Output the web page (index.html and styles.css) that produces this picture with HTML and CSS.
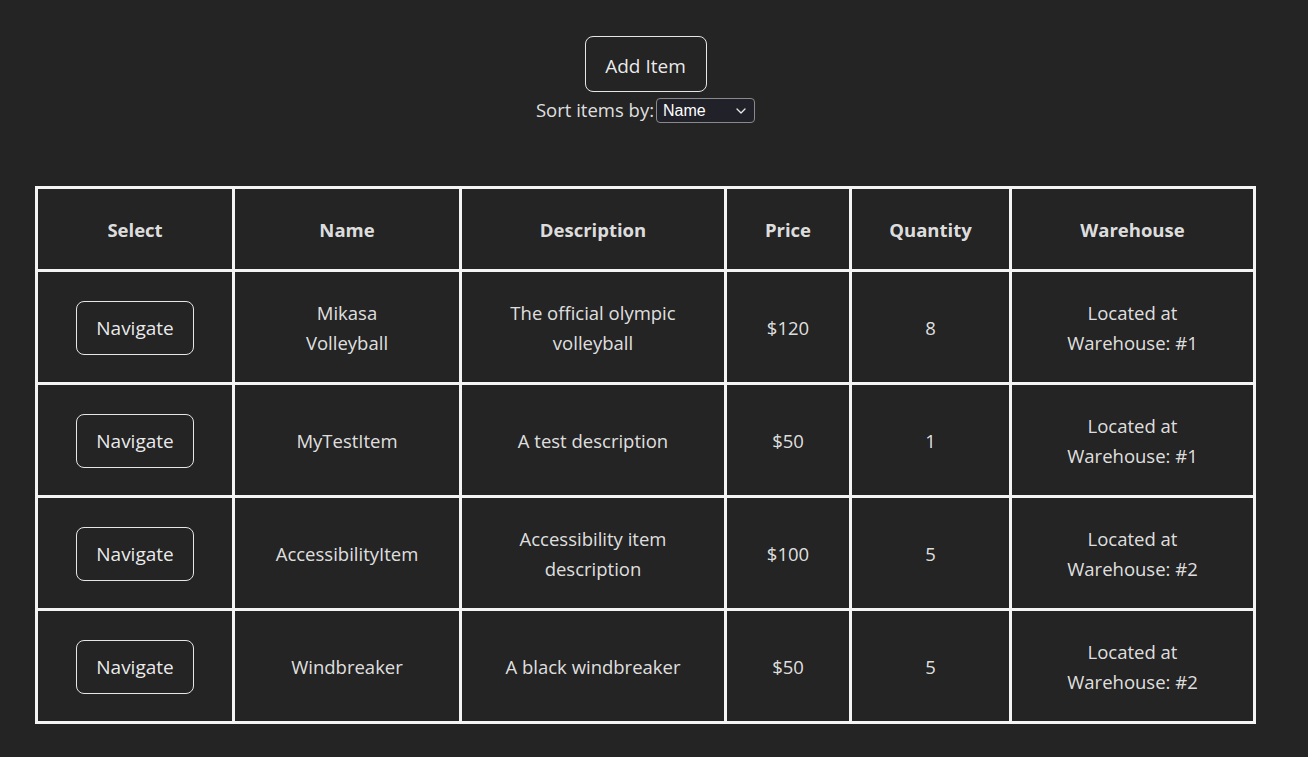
FILE: index.html
```html
<!DOCTYPE html>
<html lang="en">
<head>
<meta charset="UTF-8">
<title>Items</title>
<link rel="stylesheet" href="styles.css">
</head>
<body>
<div class="app">
  <div class="top">
    <button class="btn btn-add">Add Item</button>
    <div class="sort-row">
      <label class="sort-label" for="sort">Sort items by:</label>
      <span class="select-wrap">
        <select id="sort" class="sort-select"><option>Name</option></select>
        <svg class="chev" width="10" height="6" viewBox="0 0 10 6" aria-hidden="true"><path d="M1 1 L5 5 L9 1" fill="none" stroke="#e8e8e8" stroke-width="1.3" stroke-linecap="round" stroke-linejoin="round"/></svg>
      </span>
    </div>
  </div>
  <table class="items">
    <colgroup>
      <col class="c-select">
      <col class="c-name">
      <col class="c-desc">
      <col class="c-price">
      <col class="c-qty">
      <col class="c-wh">
    </colgroup>
    <thead>
      <tr>
        <th>Select</th>
        <th>Name</th>
        <th>Description</th>
        <th>Price</th>
        <th>Quantity</th>
        <th>Warehouse</th>
      </tr>
    </thead>
    <tbody>
      <tr>
        <td><button class="btn btn-nav">Navigate</button></td>
        <td class="name">Mikasa Volleyball</td>
        <td class="desc">The official olympic volleyball</td>
        <td>$120</td>
        <td>8</td>
        <td class="wh">Located at Warehouse: #1</td>
      </tr>
      <tr>
        <td><button class="btn btn-nav">Navigate</button></td>
        <td class="name">MyTestItem</td>
        <td class="desc">A test description</td>
        <td>$50</td>
        <td>1</td>
        <td class="wh">Located at Warehouse: #1</td>
      </tr>
      <tr>
        <td><button class="btn btn-nav">Navigate</button></td>
        <td class="name">AccessibilityItem</td>
        <td class="desc">Accessibility item description</td>
        <td>$100</td>
        <td>5</td>
        <td class="wh">Located at Warehouse: #2</td>
      </tr>
      <tr>
        <td><button class="btn btn-nav">Navigate</button></td>
        <td class="name">Windbreaker</td>
        <td class="desc">A black windbreaker</td>
        <td>$50</td>
        <td>5</td>
        <td class="wh">Located at Warehouse: #2</td>
      </tr>
    </tbody>
  </table>
</div>
</body>
</html>
```

FILE: styles.css
```css
html, body {
  margin: 0;
  padding: 0;
  background: #242424;
}

body {
  color: rgba(255, 255, 255, 0.87);
  font-family: "Open Sans", "Noto Sans", "Liberation Sans", sans-serif;
  color-scheme: dark;
}

.app {
  padding-top: 36px;
  padding-left: 35px;
}

.top {
  display: flex;
  flex-direction: column;
  align-items: center;
  width: 1221px;
}

.btn {
  font-family: inherit;
  color: rgba(255, 255, 255, 0.92);
  background: #242424;
  border: 1px solid #e6e6e6;
  border-radius: 8px;
  cursor: pointer;
}

.btn-add {
  font-size: 19px;
  line-height: 30px;
  height: 56px;
  width: 122px;
  padding: 3px 0 0 0;
}

.sort-row {
  display: flex;
  align-items: center;
  height: 32px;
  margin-top: 2px;
}

.sort-label {
  font-size: 18.5px;
  line-height: 32px;
  margin-right: 2px;
}

.select-wrap {
  position: relative;
  display: inline-block;
  height: 25px;
  margin-top: 1px;
}

.sort-select {
  appearance: none;
  -webkit-appearance: none;
  font-family: "Liberation Sans", Arial, sans-serif;
  font-size: 16px;
  color: #ffffff;
  background: #212129;
  border: 1px solid #8a8a8a;
  border-radius: 4px;
  width: 99px;
  height: 25px;
  padding: 0 0 0 6px;
  margin: 0;
  display: block;
}

.chev {
  position: absolute;
  right: 9px;
  top: 10px;
  pointer-events: none;
}

.items {
  margin-top: 60px;
  width: 1221px;
  table-layout: fixed;
  border-collapse: separate;
  border-spacing: 3px;
  background: #f4f4f4;
}

.c-select { width: 194px; }
.c-name { width: 224px; }
.c-desc { width: 262px; }
.c-price { width: 122px; }
.c-qty { width: 157px; }
.c-wh { width: 241px; }

.items th,
.items td {
  background: #242424;
  text-align: center;
  vertical-align: middle;
  padding: 2px 10px 0;
  font-size: 18.5px;
  line-height: 30px;
}

.items th {
  height: 78px;
  font-weight: 700;
  color: rgba(255, 255, 255, 0.87);
}

.items td {
  height: 108px;
}

.items td.name { padding: 2px 40px 0; }
.items td.desc { padding: 2px 30px 0; }
.items td.wh { padding: 2px 40px 0; }

.btn-nav {
  font-size: 19px;
  line-height: 30px;
  height: 54px;
  width: 118px;
  padding: 0;
  display: block;
  margin: 0 auto;
}
```
